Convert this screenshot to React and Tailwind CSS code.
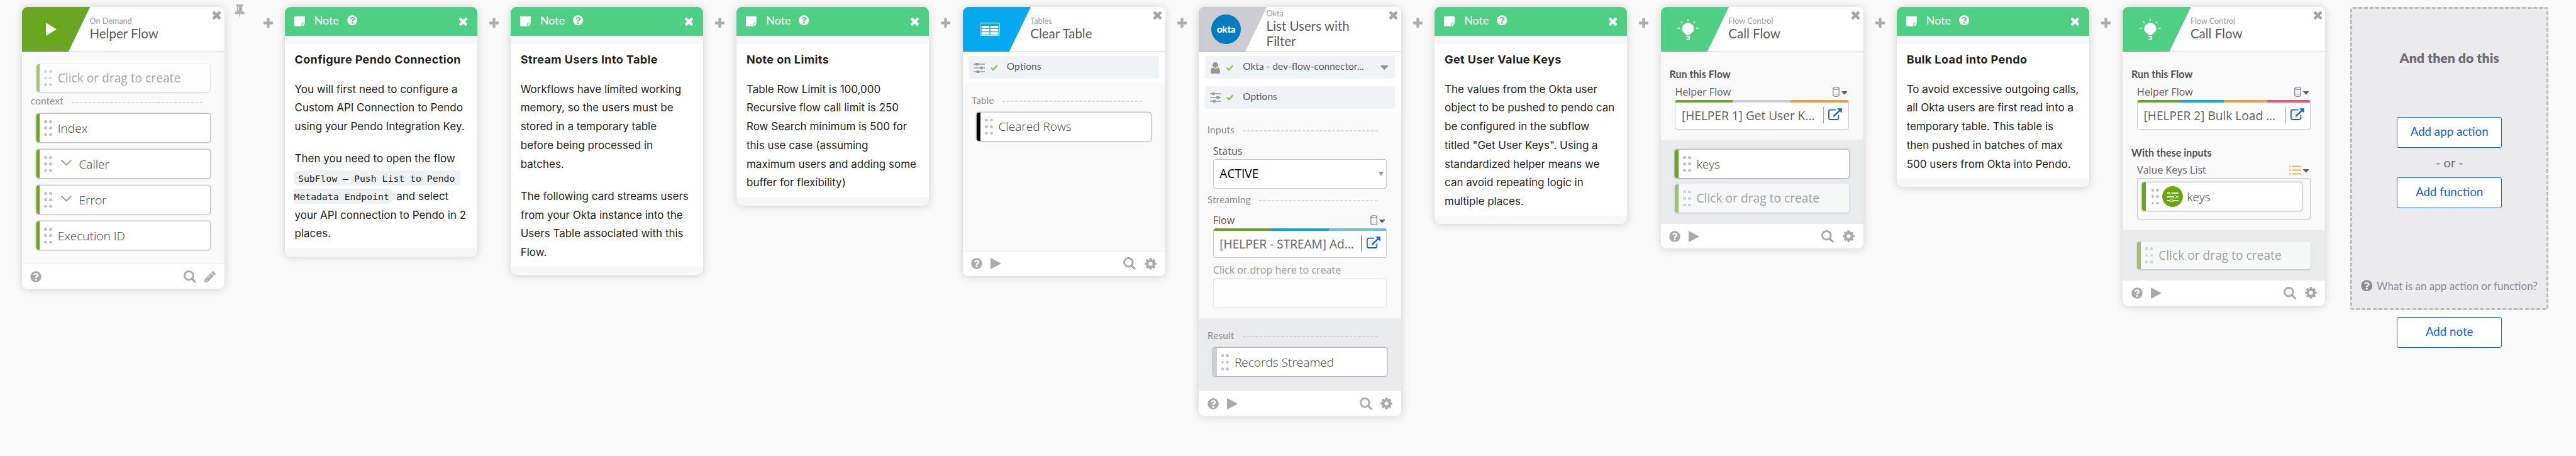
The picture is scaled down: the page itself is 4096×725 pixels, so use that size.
import { FaQuestionCircle } from "react-icons/fa";

/* ---------- icons ---------- */

const Help = ({ className = "" }) => <FaQuestionCircle className={"shrink-0 " + className} />;

const Plus = () => (
  <svg className="h-[15px] w-[15px] shrink-0" viewBox="0 0 15 15" fill="#aeaeae">
    <rect x="0" y="5.3" width="15" height="4.4" rx="1.1" />
    <rect x="5.3" y="0" width="4.4" height="15" rx="1.1" />
  </svg>
);

const Cross = ({ className = "" }) => (
  <svg className={"h-[13px] w-[13px] shrink-0 " + className} viewBox="0 0 13 13" fill="currentColor">
    <g transform="rotate(45 6.5 6.5)">
      <rect x="-1.3" y="4.3" width="15.6" height="4.4" rx="1.2" />
      <rect x="4.3" y="-1.3" width="4.4" height="15.6" rx="1.2" />
    </g>
  </svg>
);

const Pin = () => (
  <svg className="h-[22px] w-[16px] shrink-0" viewBox="0 0 16 22" fill="#b3b3b3">
    <path d="M2.6 0h10.4q.9 0 .9.9v1.1q0 .9-.9.9h-.8v7.4q3.8 1.3 3.8 5h-7l-.9 6.7-1-6.7h-7q0-3.7 3.7-5v-7.400h-.7q-.9 0-.9-.9v-1.100q0-.9.9-.9z" />
    <path d="M6.200 3.600v6" stroke="#fff" strokeWidth=".9" />
  </svg>
);

const Search = () => (
  <svg className="h-[20px] w-[20px] shrink-0" viewBox="0 0 20 20" fill="none" stroke="#aaaaaa">
    <circle cx="8.300" cy="8.200" r="6.800" strokeWidth="2.900" />
    <path d="M13.200 13.200l4.900 4.900" strokeWidth="3.200" strokeLinecap="round" />
  </svg>
);

const Gear = () => (
  <svg className="h-[19px] w-[19px] shrink-0" viewBox="-9.5 -9.500 19 19">
    <g fill="#aaaaaa">
      {[0, 45, 90, 135].map((a) => (
        <rect key={a} x="-2" y="-9.200" width="4" height="18.400" rx=".8" transform={`rotate(${a})`} />
      ))}
      <circle r="6.900" />
    </g>
    <circle r="3.100" fill="#fff" />
  </svg>
);

const Pencil = () => (
  <svg className="h-[18px] w-[18px] shrink-0" viewBox="0 0 18 18">
    <path d="M0 18v-4.600L10.200 3.200l4.600 4.600L4.600 18z" fill="#aaaaaa" />
    <path d="M11.200 2.200l1.600-1.700q.9-.9 1.800 0l2.900 2.900q.8.900 0 1.800l-1.700 1.600z" fill="#aaaaaa" />
    <path d="M1.700 13.600l1 1v1h1l1 1M4.200 12.400l6.500-6.500" stroke="#fff" strokeWidth=".9" fill="none" />
  </svg>
);

const Play = () => (
  <svg className="h-[18px] w-[17px] shrink-0" viewBox="0 0 17 18">
    <path d="M0 0l17 9-17 9z" fill="#aaaaaa" />
  </svg>
);

const Caret = ({ className = "" }) => (
  <svg className={"shrink-0 " + className} viewBox="0 0 10 6" preserveAspectRatio="none">
    <path d="M0 .6Q0 0 .6 0h8.800q.6 0 .6.6L5.400 5.800q-.4.400-.8 0z" fill="currentColor" />
  </svg>
);

const Check = () => (
  <svg className="h-[10px] w-[11px] shrink-0" viewBox="0 0 11 10">
    <path d="M1.300 5.400l2.800 2.700 5.600-6" stroke="#8cc63f" strokeWidth="2.400" fill="none" strokeLinecap="round" />
  </svg>
);

const Sliders = ({ color = "#979797", hollow }) => (
  <svg className="h-[16px] w-[18px] shrink-0" viewBox="0 0 18 16">
    {[[2, 5.300], [8, 12.500], [14, 6.800]].map(([y, x]) => (
      <g key={y}>
        <path d={`M0 ${y}h18`} stroke={color} strokeWidth={hollow ? 1.900 : 1.300} />
        <rect x={x - 2} y={y - 1.800} width="4" height="3.600" rx=".7" fill={hollow || color} stroke={color} strokeWidth=".9" />
      </g>
    ))}
  </svg>
);

const User = () => (
  <svg className="h-[18px] w-[15px] shrink-0" viewBox="0 0 15 18" fill="#979797">
    <circle cx="7.500" cy="4.500" r="4.400" />
    <path d="M3.200 8.300q4.300 3.200 8.600 0 3.200 1.200 3.200 6.200 0 3.500-2.400 3.500h-10.200q-2.400 0-2.400-3.500 0-5 3.200-6.200z" />
  </svg>
);

const Cylinder = () => (
  <svg className="h-[16px] w-[11px] shrink-0" viewBox="0 0 11 16" fill="none" stroke="#66727f" strokeWidth="1.100">
    <ellipse cx="5.500" cy="2.500" rx="4.700" ry="1.800" />
    <path d="M.8 2.500v11q0 1.800 4.700 1.800t4.700-1.800v-11" />
    <path d="M1.500 13q4-1.300 8 0" strokeWidth=".7" strokeDasharray="1.200 .8" />
  </svg>
);

const ListIcon = () => (
  <svg className="h-[15px] w-[19px] shrink-0" viewBox="0 0 19 15" fill="#ffab3d">
    {[1.400, 7.400, 13.400].map((y) => (
      <g key={y}>
        <circle cx="1.300" cy={y} r="1.200" />
        <rect x="4.600" y={y - 0.900} width="14.400" height="1.800" rx=".8" />
      </g>
    ))}
  </svg>
);

const External = () => (
  <svg className="h-[19px] w-[22px] shrink-0" viewBox="0 0 22 19" fill="none">
    <path d="M12 2.600H3.800Q.9 2.600.9 5.200v10.200q0 2.600 2.900 2.600h9.800q2.800 0 2.800-2.600v-4.300" stroke="#1662dd" strokeWidth="1.800" />
    <path d="M9 12.400L18 4" stroke="#1662dd" strokeWidth="2.400" strokeLinecap="round" />
    <path d="M14 .2h7.800v7.600z" fill="#1662dd" />
  </svg>
);

const NoteIcon = () => (
  <svg className="h-[16px] w-[17px] shrink-0" viewBox="0 0 17 16" fill="#fff">
    <path d="M.6 0h15.800q.6 0 .6.6v9.600h-4.400q-1.200 0-1.200 1.100V16H.6q-.6 0-.6-.6V.6Q0 0 .6 0z" />
    <path d="M12.500 11.200h4.400q0 .8-.5 1.300l-2.600 2.900q-.5.500-1.300.5z" />
  </svg>
);

const Bulb = () => (
  <svg className="h-[34px] w-[34px]" viewBox="0 0 34 34">
    <path d="M17 6.300a9.600 9.400 0 0 1 9.600 9.400c0 4-2.600 6-5 7.500-.9.600-1 1-1 1.900v.6h-7.200v-.6c0-.9-.1-1.300-1-1.900-2.400-1.500-5-3.500-5-7.500A9.600 9.400 0 0 1 17 6.300z" fill="#fff" />
    <path d="M14.300 28h5v2.200h-3M14.300 32.400h5v-2.200" stroke="#fff" strokeWidth="1.500" fill="none" />
    <path d="M17 .8v1.800M6.300 4.800l1.300 1.300M27.700 4.800l-1.300 1.300M1 15h2.300M33 15h-2.300" stroke="#fff" strokeWidth="1.700" strokeLinecap="round" />
  </svg>
);

const TableIcon = () => (
  <svg className="h-[21px] w-[32px]" viewBox="0 0 32 21">
    <rect x=".6" y=".6" width="30.800" height="19.800" rx="1.600" fill="none" stroke="#b5e5fc" strokeWidth="1.100" />
    {[5, 10, 15].map((y) => (
      <g key={y} fill="#fff">
        <rect x="2.600" y={y} width="12.600" height="3.900" />
        <rect x="16.600" y={y} width="12.800" height="3.900" />
      </g>
    ))}
  </svg>
);

const PlayBadge = () => (
  <div className="flex h-[47px] w-[47px] items-center justify-center rounded-full bg-[#68a91c] pl-[7px]">
    <svg className="h-[21px] w-[17px]" viewBox="0 0 17 21">
      <path d="M0 0l17 10.500L0 21z" fill="#fff" />
    </svg>
  </div>
);

const OktaBadge = () => (
  <div className="flex h-[47px] w-[47px] items-center justify-center rounded-full bg-[#007dc1] font-[Lato] text-[15.5px] leading-none font-black tracking-[-0.4px] text-white">
    okta
  </div>
);

/* ---------- building blocks ---------- */

const Card = ({ color, icon, kind, title, tall, edit, children }) => (
  <section className="flex w-[321.9px] shrink-0 flex-col overflow-hidden rounded-[9px] bg-[#f9f9f9] shadow-[0_1px_13px_rgba(0,0,0,0.17)]">
    <header className="flex h-[72.8px] border-b border-[#c3c3c3] bg-white">
      <div
        className="flex w-[108.6px] shrink-0 items-center pr-[21.4px] [clip-path:polygon(0_0,100%_0,68%_100%,0_100%)]"
        style={{ backgroundColor: color }}
      >
        <div className="flex w-full justify-center">{icon}</div>
      </div>
      <div className={"-ml-px min-w-0 flex-1 font-[Lato] " + (tall ? "pt-[3px]" : "pt-[15px]")}>
        <div className="text-[12.6px] leading-[16px] text-[#999999]">{kind}</div>
        <div className="-mt-px w-[150px] text-[20.5px] leading-[24px] text-[#5c5c5c]">{title}</div>
      </div>
      <Cross className="mt-[7px] mr-[5.5px] text-[#a5a5a5]" />
    </header>
    {children}
    <footer className="flex h-[40.4px] items-center border-t border-[#ececec] bg-white px-[13.6px]">
      <Help className="text-[18px] text-[#aaaaaa]" />
      {!edit && <div className="ml-[13px]"><Play /></div>}
      <div className="ml-auto flex items-center gap-[13.5px]">
        <Search />
        {edit ? <Pencil /> : <Gear />}
      </div>
    </footer>
  </section>
);

const Section = ({ label, className = "" }) => (
  <div className={"flex h-[20px] items-center pr-[35px] pl-[13.8px] font-[Lato] text-[15.7px] leading-[20px] text-[#8e8e8e] " + className}>
    {label}
    <svg className="mt-[5px] ml-[13.500px] h-[2px] min-w-0 flex-1">
      <path d="M0 1h400" stroke="#cbcbcb" strokeWidth="1.400" strokeDasharray="4 2.800" />
    </svg>
  </div>
);

const Heading = ({ children, className = "" }) => (
  <div className={"h-[20px] pl-[13.8px] font-[Lato] text-[16.1px] leading-[20px] font-bold text-[#505050] " + className}>{children}</div>
);

const Label = ({ children, type, className = "" }) => (
  <div className={"mx-[22.8px] flex h-[20px] items-center font-['Open_Sans'] text-[16px] leading-[20px] text-[#5e5e5e] " + className}>
    <span className="mr-auto">{children}</span>
    {type}
    {type && <Caret className="mt-[3px] mr-[2.500px] ml-[3px] h-[5.500px] w-[9.500px] text-[#5e5e5e]" />}
  </div>
);

const Dots = () => (
  <div className="grid shrink-0 grid-cols-2 gap-x-[3.100px] gap-y-[5.800px]">
    {[0, 1, 2, 3, 4, 5].map((i) => (
      <i key={i} className="h-[4.600px] w-[4.600px] rounded-full bg-[#c2c2c2]" />
    ))}
  </div>
);

const Pill = ({ color = "#6ba524", children, expandable, badge, className = "mx-[22.8px]" }) => (
  <div
    className={
      "flex h-[45px] items-center overflow-hidden rounded-[4px] bg-white font-['Open_Sans'] text-[19.1px] leading-[24px] font-light text-[#3c3c3c] shadow-[0_0_2px_0.6px_rgba(0,0,0,0.3)] " +
      className
    }
  >
    <div className="mr-[7px] h-full w-[5.800px] shrink-0" style={{ backgroundColor: color }} />
    <div className={badge ? "ml-[1.700px]" : ""}><Dots /></div>
    {expandable && (
      <svg className="mt-[-3px] ml-[13.800px] h-[11px] w-[17px]" viewBox="0 0 17 11">
        <path d="M1.200 1.200l7.300 7 7.300-7" fill="none" stroke="#a6a6a6" strokeWidth="2.200" strokeLinecap="round" />
      </svg>
    )}
    {badge}
    <span className={badge ? "ml-[6px]" : expandable ? "ml-[12px]" : "ml-[9px]"}>{children}</span>
  </div>
);

const Ghost = () => (
  <div className="mx-[22.8px] flex h-[44.600px] items-center overflow-hidden rounded-[4px] bg-white font-['Open_Sans'] text-[19.200px] leading-[24px] text-[#6f6f6f] opacity-60 shadow-[0_1px_3px_rgba(0,0,0,0.3)]">
    <div className="mr-[7px] h-full w-[5.800px] shrink-0 bg-[#6ba524]" />
    <Dots />
    <span className="ml-[9px]">Click or drag to create</span>
  </div>
);

const FlowField = ({ colors, children, className = "" }) => {
  const w = 276.300 / colors.length;
  return (
    <div className={"mx-[22.8px] flex h-[47px] flex-col overflow-hidden rounded-[4px] border border-t-0 border-[#c6c6c6] bg-white " + className}>
      <svg className="mx-[-1px] h-[4px] w-[276.300px] shrink-0">
        {colors.map((c, i) => (
          <path key={c} fill={c} d={`M${i ? i * w + 1 : 0} 0H280V4H${i ? i * w - 1 : 0}z`} />
        ))}
      </svg>
      <div className="flex flex-1 items-center pr-[9.500px] pl-[9.500px] font-['Open_Sans'] text-[19.100px] leading-[24px] whitespace-nowrap text-[#5e5e5e]">
        <span className="mr-auto">{children}</span>
        <i className="mt-[-1px] mr-[7px] h-[26px] w-[1.400px] bg-[#a3a3a3]" />
        <div className="mt-[-4px]"><External /></div>
      </div>
    </div>
  );
};

const OptionRow = ({ icon, label, caret }) => (
  <div className="h-[47.300px] bg-white px-[9.700px] pt-[6px]">
    <div className="flex h-[36px] items-center rounded-[3px] bg-[#eff3f6] pr-[10.800px] pl-[7.500px] font-[Lato] text-[15.500px] leading-[20px] text-[#5a5a5a]">
      <div className="mt-[1px] flex w-[19px] justify-center">{icon}</div>
      <div className="mx-[8px] mt-[1px]"><Check /></div>
      <span className="mt-[-4px] ml-[7px]">{label}</span>
      {caret && <Caret className="mt-px ml-auto h-[7px] w-[12.500px] text-[#8f8f8f]" />}
    </div>
  </div>
);

const Note = ({ title, children }) => (
  <section className="w-[305.750px] shrink-0 overflow-hidden rounded-[9px] bg-[#f7f7f7] shadow-[0_1px_13px_rgba(0,0,0,0.17)]">
    <header className="flex h-[46.600px] bg-[#4fcf84] px-[14.800px] font-[Lato] text-white">
      <div className="mt-[15.500px]"><NoteIcon /></div>
      <span className="mt-[9.600px] ml-[15px] text-[17.900px] leading-[24px]">Note</span>
      <Help className="mt-[13.800px] ml-[13px] text-[16.500px]" />
      <Cross className="mt-[17.800px] mr-[1px] ml-auto" />
    </header>
    <div className="mt-[13.200px] mb-[13.200px] bg-white pt-[10px] pb-[7.200px] pl-[15.600px] font-[Inter] text-[17px] leading-[29.750px] whitespace-nowrap text-[#1f1f22]">
      <h3 className="mb-[17.500px] text-[18px] font-bold tracking-[0.400px]">{title}</h3>
      <div className="flex flex-col gap-[21.500px]">{children}</div>
    </div>
  </section>
);

const Lines = ({ rows }) => (
  <p>
    {rows.map((r) => (
      <span key={r} className="block">{r}</span>
    ))}
  </p>
);

const Gap = () => (
  <div className="flex w-[53.500px] shrink-0 justify-center pt-[18px]"><Plus /></div>
);

const Button = ({ children, className = "" }) => (
  <button className={"h-[49.200px] w-[167.400px] rounded-[3px] border-[1.500px] border-[#1662dd] bg-white pb-[2px] font-[Lato] text-[18.700px] leading-[24px] text-[#1662dd] " + className}>
    {children}
  </button>
);

/* ---------- page ---------- */

export default function App() {
  return (
    <main className="flex h-[725px] w-[4096px] items-start overflow-hidden bg-[#f9f9f9] pt-[10.700px] pl-[34.850px]">
      <Card color="#6ba524" icon={<PlayBadge />} kind="On Demand" title="Helper Flow" edit>
        <div className="flex h-[335.500px] flex-col pt-[18.100px]">
          <Ghost />
          <Section label="context" className="mt-[4.200px]" />
          <div className="mt-[10.800px] flex flex-col gap-[12px]">
            <Pill>Index</Pill>
            <Pill expandable>Caller</Pill>
            <Pill expandable>Error</Pill>
            <Pill>Execution ID</Pill>
          </div>
        </div>
      </Card>

      <div className="flex w-[96.150px] shrink-0 items-start pl-[16.200px]">
        <div className="mt-[-3.700px]"><Pin /></div>
        <div className="mt-[18px] ml-[29.800px]"><Plus /></div>
      </div>

      <Note title="Configure Pendo Connection">
        <Lines rows={["You will first need to configure a", "Custom API Connection to Pendo", "using your Pendo Integration Key."]} />
        <p>
          Then you need to open the flow
          <br />
          <code className="ml-[-1px] rounded-l-[8px] bg-[#edf1f2] py-[3.500px] pr-[9px] pl-[6.500px] font-['DejaVu_Sans_Mono'] text-[14.800px]">SubFlow – Push List to Pendo</code>
          <br />
          <code className="ml-[-1px] rounded-r-[8px] bg-[#edf1f2] py-[3.500px] pr-[6.500px] font-['DejaVu_Sans_Mono'] text-[14.800px]">Metadata Endpoint</code> and select
          <br />
          your API connection to Pendo in 2
          <br />
          places.
        </p>
      </Note>
      <Gap />

      <Note title="Stream Users Into Table">
        <Lines rows={["Workflows have limited working", "memory, so the users must be", "stored in a temporary table", "before being processed in", "batches."]} />
        <Lines rows={["The following card streams users", "from your Okta instance into the", "Users Table associated with this", "Flow."]} />
      </Note>
      <Gap />

      <Note title="Note on Limits">
        <Lines rows={["Table Row Limit is 100,000", "Recursive flow call limit is 250", "Row Search minimum is 500 for", "this use case (assuming", "maximum users and adding some", "buffer for flexibility)"]} />
      </Note>
      <Gap />

      <Card color="#05a9f0" icon={<TableIcon />} kind="Tables" title="Clear Table">
        <OptionRow icon={<Sliders />} label="Options" />
        <div className="h-[268px] pt-[18px]">
          <Section label="Table" />
          <div className="mt-[10.200px]"><Pill color="#000000">Cleared Rows</Pill></div>
        </div>
      </Card>
      <Gap />

      <Card color="#cccdd2" icon={<OktaBadge />} kind="Okta" title="List Users with Filter" tall>
        <OptionRow icon={<User />} label="Okta - dev-flow-connector..." caret />
        <OptionRow icon={<Sliders />} label="Options" />
        <div className="pb-[16.600px]">
          <Section label="Inputs" className="mt-[17.500px]" />
          <Label className="mt-[14.200px]">Status</Label>
          <div className="mx-[22.800px] mt-[3px] flex h-[46.800px] items-center rounded-[4px] border border-[#c6c6c6] bg-white pr-[4px] pl-[9.500px] font-['Open_Sans'] text-[19.100px] text-black">
            <span className="mr-auto">ACTIVE</span>
            <svg className="h-[7px] w-[8px]" viewBox="0 0 8 7"><path d="M0 0h8L4 7z" fill="#9c9c9c" /></svg>
          </div>
          <Section label="Streaming" className="mt-[7px]" />
          <Label className="mt-[13.900px]" type={<Cylinder />}>Flow</Label>
          <FlowField className="mt-[2.100px]" colors={["#6ba524", "#05a9f0", "#6fc0e0"]}>[HELPER - STREAM] Ad...</FlowField>
          <Label className="mt-[9.900px] text-[#999999]!">Click or drop here to create</Label>
          <div className="mx-[22.800px] mt-[2.900px] h-[46.800px] rounded-[3px] border border-[#e9e9e9] bg-[#fcfcfc]" />
        </div>
        <div className="bg-[#eaebed] pt-[17.200px] pb-[22.800px]">
          <Section label="Result" />
          <div className="pt-[10.500px]"><Pill color="#cccdd2">Records Streamed</Pill></div>
        </div>
      </Card>
      <Gap />

      <Note title="Get User Value Keys">
        <Lines rows={["The values from the Okta user", "object to be pushed to pendo can", "be configured in the subflow", 'titled "Get User Keys". Using a', "standardized helper means we", "can avoid repeating logic in", "multiple places."]} />
      </Note>
      <Gap />

      <Card color="#4fcf84" icon={<Bulb />} kind="Flow Control" title="Call Flow">
        <div className="pt-[24.500px] pb-[16.300px]">
          <Heading>Run this Flow</Heading>
          <Label className="mt-[8.400px]" type={<Cylinder />}>Helper Flow</Label>
          <FlowField className="mt-[2.400px]" colors={["#6ba524", "#cccdd2", "#f29b38"]}>[HELPER 1] Get User K...</FlowField>
        </div>
        <div className="flex flex-col gap-[9.900px] bg-[#eaebed] pt-[16.200px] pb-[17.200px]">
          <Pill>keys</Pill>
          <Ghost />
        </div>
      </Card>
      <Gap />

      <Note title="Bulk Load into Pendo">
        <Lines rows={["To avoid excessive outgoing calls,", "all Okta users are first read into a", "temporary table. This table is", "then pushed in batches of max", "500 users from Okta into Pendo."]} />
      </Note>
      <Gap />

      <Card color="#4fcf84" icon={<Bulb />} kind="Flow Control" title="Call Flow">
        <div className="pt-[24.500px] pb-[16.700px]">
          <Heading>Run this Flow</Heading>
          <Label className="mt-[8.400px]" type={<Cylinder />}>Helper Flow</Label>
          <FlowField className="mt-[2.400px]" colors={["#6ba524", "#05a9f0", "#f29b38", "#ff4a76"]}>[HELPER 2] Bulk Load ...</FlowField>
          <Heading className="mt-[26.800px]">With these inputs</Heading>
          <Label className="mt-[7.500px]" type={<ListIcon />}>Value Keys List</Label>
          <div className="mx-[22.800px] mt-[2.700px] h-[66.700px] rounded-[4px] border border-[#c6c6c6] pt-[6.500px] pr-[13px] pl-[7px]">
            <Pill
              className=""
              badge={
                <div className="ml-[5px] flex h-[33.300px] w-[33.300px] shrink-0 items-center justify-center rounded-full bg-[#68a610]">
                  <Sliders color="#e9f4da" hollow="#68a610" />
                </div>
              }
            >
              keys
            </Pill>
          </div>
        </div>
        <div className="bg-[#eaebed] pt-[17.500px] pb-[17px]">
          <Ghost />
        </div>
      </Card>

      <div className="ml-[39.800px] flex w-[315.400px] shrink-0 flex-col items-center">
        <div className="flex h-[482.300px] w-full flex-col items-center rounded-[4px] border-[3px] border-dashed border-[#bdbdbd] bg-[#ebebed] font-[Lato]">
          <h2 className="mt-[64px] text-[21.300px] leading-[28px] font-extrabold text-[#6e6e78]">And then do this</h2>
          <Button className="mt-[80px]">Add app action</Button>
          <div className="flex h-[46.700px] items-center text-[20px] leading-[24px] text-[#6b6b6b]">- or -</div>
          <Button>Add function</Button>
          <div className="mt-[112px] flex items-center gap-[6px] text-[17px] leading-[20px] text-[#8c8c96]">
            <Help className="text-[18.500px]" />
            <span className="mt-[2px]">What is an app action or function?</span>
          </div>
        </div>
        <Button className="mt-[10.700px]">Add note</Button>
      </div>
    </main>
  );
}
